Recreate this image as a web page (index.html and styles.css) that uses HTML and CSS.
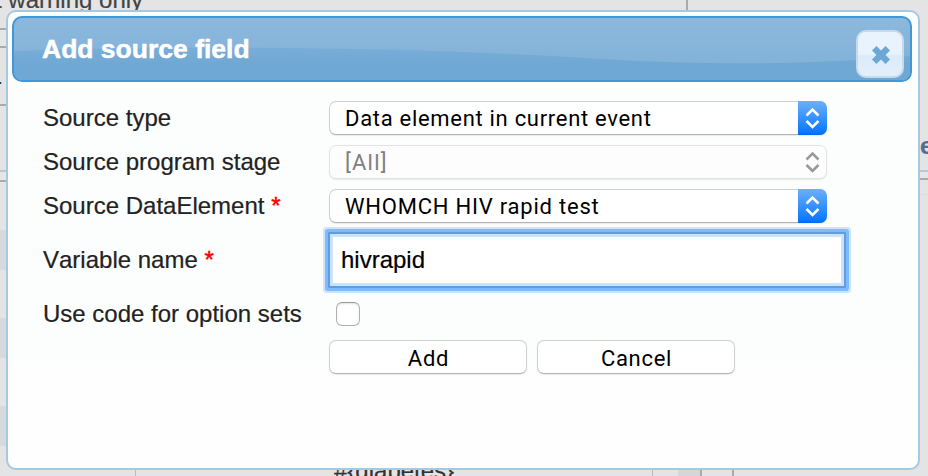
FILE: index.html
```html
<!DOCTYPE html>
<html lang="en">
<head>
<meta charset="utf-8">
<title>Add source field</title>
<link rel="stylesheet" href="styles.css">
</head>
<body>
<div class="page">
  <div class="page-left">
    <div class="row row-note"><span class="note">t warning only</span></div>
    <div class="row row-light"></div>
    <div class="row row-field"><span class="field-text">-</span></div>
    <div class="row row-gap"></div>
    <div class="row row-head"></div>
    <div class="row row-first"></div>
    <div class="row band"></div>
    <div class="row plain"></div>
    <div class="row band"></div>
    <div class="row plain"></div>
    <div class="row band"></div>
    <div class="row row-last">
      <div class="cell cell-blank"></div>
      <div class="cell cell-var"><span>#{diabetes}</span></div>
      <div class="cell cell-gap"></div>
      <div class="cell cell-dark"></div>
      <div class="cell cell-narrow"></div>
    </div>
  </div>
  <div class="page-right">
    <div class="right-top"></div>
    <div class="right-title"><b>e</b></div>
    <div class="right-head"></div>
    <div class="right-sub"></div>
  </div>
</div>

<div class="dialog" role="dialog">
  <div class="titlebar">
    <svg class="wave" viewBox="0 0 896 62" preserveAspectRatio="none">
      <defs><linearGradient id="w" x1="0" y1="0" x2="0" y2="1"><stop offset="0" stop-color="#78add7"/><stop offset=".5" stop-color="#70a8d4"/><stop offset="1" stop-color="#6fa8d5"/></linearGradient></defs>
      <path fill="url(#w)" d="M0 33 Q110 29 270 30 T590 41 T896 38 V62 H0Z"/>
    </svg>
    <span class="title">Add source field</span>
    <button class="close" aria-label="Close">
      <svg width="20" height="20" viewBox="0 0 20 20"><path d="M3.2 3.2L16.8 16.8M16.8 3.2L3.2 16.8"/></svg>
    </button>
  </div>
  <div class="form">
    <div class="line">
      <label>Source type</label>
      <div class="select"><span class="value v1">Data element in current event</span><i class="arrows"><svg width="29" height="34" viewBox="0 0 29 34"><path d="M8.5 14.5L14.5 8.5L20.5 14.5M8.5 20L14.5 26L20.5 20"/></svg></i></div>
    </div>
    <div class="line">
      <label>Source program stage</label>
      <div class="select disabled"><span class="value v2">[All]</span><i class="arrows"><svg width="29" height="34" viewBox="0 0 29 34"><path d="M8.5 14.5L14.5 8.5L20.5 14.5M8.5 20L14.5 26L20.5 20"/></svg></i></div>
    </div>
    <div class="line">
      <label>Source DataElement <em>*</em></label>
      <div class="select"><span class="value v3">WHOMCH HIV rapid test</span><i class="arrows"><svg width="29" height="34" viewBox="0 0 29 34"><path d="M8.5 14.5L14.5 8.5L20.5 14.5M8.5 20L14.5 26L20.5 20"/></svg></i></div>
    </div>
    <div class="line tall">
      <label>Variable name <em>*</em></label>
      <div class="input">hivrapid</div>
    </div>
    <div class="line">
      <label>Use code for option sets</label>
      <span class="check"></span>
    </div>
    <div class="line actions">
      <button class="btn">Add</button>
      <button class="btn">Cancel</button>
    </div>
  </div>
</div>
</body>
</html>
```

FILE: styles.css
```css
* { box-sizing: border-box; }
body {
  margin: 0;
  width: 928px;
  height: 476px;
  overflow: hidden;
  position: relative;
  background: #e4e4e4;
  font-family: "Liberation Sans", Arial, sans-serif;
  font-size: 24px;
  color: #222;
  -webkit-text-stroke: .2px;
}
.page { display: flex; height: 476px; overflow: hidden; }
.page-left { width: 760px; flex: none; }
.page-right { flex: 1; }
.row { display: flex; overflow: hidden; }
.row-note { height: 30px; width: 688px; border-bottom: 2px solid #aaa; border-right: 2px solid #aaa; }
.note { margin: -14px 0 0 -5px; line-height: 28px; color: #444; white-space: nowrap; }
.row-light { height: 18px; background: #e6e6e6; border-bottom: 2px solid #aaa; }
.row-field { height: 58px; border-bottom: 2px solid #aaa; }
.field-text { margin: 19px 0 0 -6px; line-height: 28px; }
.row-gap { height: 66px; border-bottom: 2px solid #b9c7d6; }
.row-head { height: 10px; background: #e6e6e6; border-bottom: 2px solid #aaa; }
.row-first { height: 48px; }
.band { height: 40px; background: #d6d9de; }
.plain { height: 48px; }
.row-last { height: 30px; }
.cell { height: 100%; flex: none; }
.cell-blank { width: 136px; border-right: 1px solid #bbb; }
.cell-var { width: 517px; border-right: 1px solid #bbb; padding-left: 198px; line-height: 28px; padding-top: 11px; color: #333; }
.cell-gap { width: 25px; }
.cell-dark { width: 24px; background: #d6d6d6; border-right: 2px solid #aaa; }
.cell-narrow { width: 32px; border-right: 2px solid #aaa; }
.right-top { height: 130px; }
.right-title { height: 42px; padding-left: 160px; line-height: 32px; color: #576d8e; border-bottom: 2px solid #b9c7d6; overflow: hidden; }
.right-head { height: 8px; background: #e6e6e6; border-bottom: 2px solid #aaa; }
.right-sub { height: 15px; border-bottom: 1px solid #dcdcdc; }

.dialog {
  position: absolute;
  left: 6px;
  top: 10px;
  width: 914px;
  height: 460px;
  border: 2px solid #a6c9e2;
  border-radius: 10px;
  padding: 4px 6px 4px 4px;
  background: linear-gradient(#fcfdfd 0, #fcfefd 340px, #fefefe 370px);
}
.titlebar {
  position: relative;
  display: flex;
  align-items: center;
  justify-content: space-between;
  height: 66px;
  border: 2px solid #4297d7;
  border-radius: 10px;
  padding: 0 6px 0 28px;
  background: linear-gradient(#8cb8dc, #84b3da 60%);
  overflow: hidden;
}
.wave { position: absolute; inset: 0; width: 100%; height: 100%; }
.title { position: relative; font-weight: bold; font-size: 26.5px; line-height: 30px; color: #fff; -webkit-text-stroke: .5px; }
.close {
  position: relative;
  display: flex;
  align-items: center;
  justify-content: center;
  width: 48px;
  height: 48px;
  margin-top: 10px;
  padding: 2px 0 0 2px;
  border: 2px solid #c5dbec;
  border-radius: 10px;
  background: linear-gradient(#e9f3fd 0 50%, #dcebf9 54%, #e2effb);
}
.close path { fill: none; stroke: #6da8d5; stroke-width: 6.4; }

.form { padding: 14px 0 0 31px; }
.line { display: flex; align-items: center; height: 44px; }
.line label { width: 286px; flex: none; line-height: 28px; white-space: nowrap; font-kerning: none; }
.line em { font-style: normal; color: #f00; -webkit-text-stroke: .5px; }
.tall { height: 64px; }
.select {
  display: flex;
  width: 498px;
  height: 34px;
  border: 1px solid #cfcfcf;
  border-bottom-color: #b4b4b4;
  border-radius: 7px;
  background: #fff;
  box-shadow: 0 1px 1px rgba(0, 0, 0, .08);
  font-family: Roboto, sans-serif;
  font-size: 22px;
  line-height: 33px;
  -webkit-text-stroke: 0;
  color: #000;
}
.value { flex: 1; padding-left: 15px; white-space: nowrap; }
.v1 { letter-spacing: .7px; }
.v2 { letter-spacing: 1.2px; }
.v3 { letter-spacing: .78px; }
.arrows {
  width: 29px;
  height: 34px;
  margin: -1px -1px 0 0;
  border-radius: 0 7px 7px 0;
  background: linear-gradient(#6cb0fa, #0a7aff 90%, #0068f5);
}
.arrows svg { display: block; }
.arrows path { fill: none; stroke: #fff; stroke-width: 2.5; }
.disabled { border-color: #e3e3e3; color: #808080; background: #fdfdfd; }
.disabled .arrows { background: none; }
.disabled path { stroke: #999; }
.input {
  width: 518px;
  height: 56px;
  margin-left: -1px;
  border: 2px solid #5f9de0;
  border-radius: 1px;
  background: #fff;
  box-shadow: inset 0 0 0 3px #c9e2fd, 0 0 0 3px #7fbaf9, 0 0 0 5px #cbe4ff;
  padding-left: 11px;
  line-height: 52px;
  color: #000;
}
.check {
  width: 24px;
  height: 24px;
  margin-left: 7px;
  border: 1px solid #b0b0b0;
  border-top-color: #999;
  border-radius: 6px;
  background: #fff;
  box-shadow: inset 0 1px 2px rgba(0, 0, 0, .12);
}
.actions { height: 42px; padding-left: 286px; gap: 10px; }
.btn {
  width: 198px;
  height: 34px;
  padding: 2px 0 0 1px;
  border: 1px solid #cfcfcf;
  border-bottom-color: #b4b4b4;
  border-radius: 7px;
  background: #fff;
  box-shadow: 0 1px 1px rgba(0, 0, 0, .08);
  font-family: Roboto, sans-serif;
  font-size: 22px;
  letter-spacing: .7px;
  -webkit-text-stroke: 0;
  color: #000;
}
```
